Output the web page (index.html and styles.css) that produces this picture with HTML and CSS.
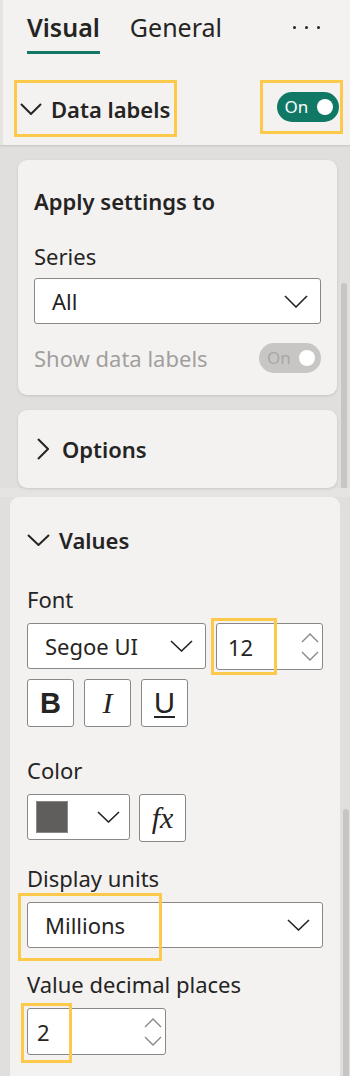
FILE: index.html
```html
<!DOCTYPE html>
<html lang="en">
<head>
    <meta charset="UTF-8">
    <meta name="viewport" content="width=device-width, initial-scale=1.0">
    <title>Format pane</title>
    <link rel="stylesheet" href="styles.css">
</head>
<body>
    <div class="top">
        <div class="tabs">
            <div class="tab active">Visual</div>
            <div class="tab">General</div>
            <div class="more"><span></span><span></span><span></span></div>
        </div>
        <div class="section-head">
            <div class="head-title">
                <svg class="chev" width="22" height="12" viewBox="0 0 22 12"><polyline points="1,1 11,11 21,1"/></svg>
                <span>Data labels</span>
                <div class="hl hl-title"></div>
            </div>
            <div class="toggle-wrap">
                <div class="toggle on">On<span class="knob"></span></div>
                <div class="hl hl-toggle"></div>
            </div>
        </div>
    </div>

    <div class="scroll">
        <div class="cards">
            <div class="card apply">
                <div class="card-title">Apply settings to</div>
                <div class="label">Series</div>
                <div class="dropdown wide">
                    <span>All</span>
                    <svg class="chev thin" width="24" height="13" viewBox="0 0 24 13"><polyline points="1,1 12,12 23,1"/></svg>
                </div>
                <div class="row">
                    <span class="disabled-text">Show data labels</span>
                    <div class="toggle off">On<span class="knob"></span></div>
                </div>
            </div>
            <div class="card options">
                <svg class="chev-right" width="12" height="22" viewBox="0 0 12 22"><polyline points="1,1 11,11 1,21"/></svg>
                <span>Options</span>
            </div>
        </div>
        <div class="scrollbar scrollbar-top"></div>
    </div>

    <div class="lower">
        <div class="values">
            <div class="values-head">
                <svg class="chev" width="23" height="12" viewBox="0 0 23 12"><polyline points="1,1 11.5,11 22,1"/></svg>
                <span>Values</span>
            </div>

            <div class="label first">Font</div>
            <div class="font-row">
                <div class="dropdown font-family">
                    <span>Segoe UI</span>
                    <svg class="chev thin" width="23" height="12" viewBox="0 0 23 12"><polyline points="1,1 11.5,11 22,1"/></svg>
                </div>
                <div class="spin size">
                    <span>12</span>
                    <div class="arrows">
                        <svg width="18" height="10" viewBox="0 0 18 10"><polyline points="1,9 9,1 17,9"/></svg>
                        <svg width="18" height="10" viewBox="0 0 18 10"><polyline points="1,1 9,9 17,1"/></svg>
                    </div>
                    <div class="hl hl-size"></div>
                </div>
            </div>
            <div class="style-row">
                <div class="sq-btn bold">B</div>
                <div class="sq-btn italic">I</div>
                <div class="sq-btn under">U</div>
            </div>

            <div class="label">Color</div>
            <div class="color-row">
                <div class="dropdown color-pick">
                    <span class="swatch"></span>
                    <svg class="chev thin" width="23" height="12" viewBox="0 0 23 12"><polyline points="1,1 11.5,11 22,1"/></svg>
                </div>
                <div class="sq-btn fx">fx</div>
            </div>

            <div class="label tight">Display units</div>
            <div class="dropdown units">
                <span>Millions</span>
                <svg class="chev thin" width="23" height="12" viewBox="0 0 23 12"><polyline points="1,1 11.5,11 22,1"/></svg>
                <div class="hl hl-units"></div>
            </div>

            <div class="label tight">Value decimal places</div>
            <div class="spin decimals">
                <span>2</span>
                <div class="arrows">
                    <svg width="18" height="10" viewBox="0 0 18 10"><polyline points="1,9 9,1 17,9"/></svg>
                    <svg width="18" height="10" viewBox="0 0 18 10"><polyline points="1,1 9,9 17,1"/></svg>
                </div>
                <div class="hl hl-dec"></div>
            </div>
        </div>
        <div class="side">
            <div class="scrollbar scrollbar-bottom"></div>
        </div>
    </div>
</body>
</html>
```

FILE: styles.css
```css
body {
    margin: 0;
    width: 350px;
    height: 1076px;
    overflow: hidden;
    background: #e1dfdd;
    font-family: "Noto Sans", "Open Sans", sans-serif;
    color: #252423;
}
svg polyline {
    fill: none;
    stroke: #252423;
    stroke-width: 2;
}
svg.thin polyline {
    stroke-width: 1.6;
}

/* header area */
.top {
    position: relative;
    z-index: 1;
    height: 145px;
    background: #f3f2f1;
    border-left: 3px solid #e6e4e2;
    box-shadow: 0 1px 2px rgba(0, 0, 0, 0.12);
}
.tabs {
    display: flex;
    align-items: flex-start;
    height: 70px;
    padding-left: 24px;
}
.tab {
    font-size: 25px;
    line-height: 32px;
    margin-top: 11px;
    margin-right: 30px;
    padding-bottom: 8px;
}
.tab.active {
    font-weight: 600;
    border-bottom: 3px solid #117865;
}
.more {
    display: flex;
    gap: 9px;
    margin-left: auto;
    margin-right: 30px;
    margin-top: 26px;
}
.more span {
    width: 3px;
    height: 3px;
    border-radius: 50%;
    background: #252423;
}
.section-head {
    display: flex;
    justify-content: space-between;
    padding: 10px 7px 0 11px;
}
.head-title {
    position: relative;
    display: flex;
    align-items: center;
    gap: 9px;
    height: 57px;
    width: 163px;
    padding-left: 6px;
    box-sizing: border-box;
    font-size: 22px;
    font-weight: 600;
}
.toggle-wrap {
    position: relative;
    display: flex;
    align-items: center;
    justify-content: center;
    width: 83px;
    height: 54px;
}
.hl {
    position: absolute;
    border: 3px solid #fdc94a;
    box-sizing: border-box;
    pointer-events: none;
}
.hl-title, .hl-toggle {
    inset: 0;
}

.toggle {
    position: relative;
    box-sizing: border-box;
    border-radius: 16px;
    font-size: 17px;
    line-height: 30px;
}
.toggle.on {
    width: 62px;
    height: 30px;
    padding-left: 8px;
    margin-left: 12px;
    background: #117865;
    color: #fff;
}
.toggle.off {
    width: 62px;
    height: 30px;
    padding-left: 8px;
    background: #c8c6c4;
    color: #a9a7a5;
}
.knob {
    position: absolute;
    right: 6px;
    top: 7px;
    width: 16px;
    height: 16px;
    border-radius: 50%;
    background: #fff;
}

/* middle scroll area */
.scroll {
    position: relative;
    height: 343px;
    padding: 15px 0 0 18px;
    box-sizing: border-box;
}
.cards {
    width: 319px;
    display: flex;
    flex-direction: column;
    gap: 15px;
}
.card {
    background: #f3f2f1;
    border-radius: 9px;
    box-shadow: 0 1px 3px rgba(0, 0, 0, 0.12);
}
.apply {
    height: 235px;
    padding: 0 16px;
    box-sizing: border-box;
}
.card-title {
    font-size: 22px;
    font-weight: 600;
    line-height: 28px;
    padding-top: 27px;
}
.label {
    font-size: 22px;
    line-height: 28px;
    margin-top: 27px;
    margin-bottom: 9px;
}
.apply .label {
    margin-top: 27px;
    margin-bottom: 8px;
}
.dropdown {
    position: relative;
    display: flex;
    align-items: center;
    justify-content: space-between;
    box-sizing: border-box;
    height: 46px;
    background: #fff;
    border: 1px solid #8a8886;
    border-radius: 3px;
    font-size: 22px;
    padding: 0 12px 0 17px;
}
.row {
    display: flex;
    justify-content: space-between;
    align-items: center;
    margin-top: 19px;
}
.disabled-text {
    font-size: 22px;
    color: #a19f9d;
}
.options {
    display: flex;
    align-items: center;
    gap: 13px;
    height: 78px;
    padding-left: 19px;
    box-sizing: border-box;
    font-size: 22px;
    font-weight: 600;
}
.scrollbar {
    position: absolute;
    width: 6px;
    background: #c8c6c4;
    border-radius: 3px;
}
.scrollbar-top {
    right: 3px;
    top: 138px;
    height: 205px;
    border-radius: 3px 3px 0 0;
}

/* values panel */
.lower {
    display: flex;
    height: 588px;
    border-top: 9px solid #e6e4e2;
}
.values {
    width: 330px;
    margin-left: 10px;
    background: #f3f2f1;
    border-radius: 9px 9px 0 0;
    padding: 0 17px;
    box-sizing: border-box;
}
.side {
    position: relative;
    flex: 1;
}
.scrollbar-bottom {
    left: 3px;
    top: 312px;
    height: 300px;
}
.values-head {
    display: flex;
    align-items: center;
    gap: 9px;
    padding-top: 29px;
    font-size: 22px;
    font-weight: 600;
    line-height: 28px;
}
.values .label {
    margin-top: 29px;
    margin-bottom: 10px;
}
.values .label.first {
    margin-top: 31px;
}
.values .label.tight {
    margin-top: 22px;
}
.font-row {
    display: flex;
    gap: 10px;
}
.font-family {
    width: 179px;
}
.spin {
    position: relative;
    display: flex;
    align-items: center;
    justify-content: space-between;
    box-sizing: border-box;
    height: 47px;
    background: #fff;
    border: 1px solid #8a8886;
    border-radius: 3px;
    font-size: 22px;
    padding: 0 3px 0 11px;
}
.size {
    width: 107px;
}
.arrows {
    display: flex;
    flex-direction: column;
    gap: 8px;
}
.arrows svg {
    display: block;
}
.arrows polyline {
    stroke: #8a8886;
    stroke-width: 1.4;
}
.hl-size {
    left: -6px;
    top: -6px;
    width: 66px;
    height: 57px;
}
.style-row {
    display: flex;
    gap: 10px;
    margin-top: 9px;
}
.sq-btn {
    width: 47px;
    height: 48px;
    box-sizing: border-box;
    background: #fff;
    border: 1px solid #8a8886;
    border-radius: 3px;
    display: flex;
    align-items: center;
    justify-content: center;
    font-size: 29px;
}
.bold {
    font-family: "Liberation Sans", sans-serif;
    font-weight: 700;
}
.italic {
    font-family: "Liberation Serif", serif;
    font-style: italic;
    font-size: 30px;
}
.under {
    font-family: "Liberation Sans", sans-serif;
    text-decoration: underline;
    text-underline-offset: 3px;
    text-decoration-thickness: 2px;
}
.color-row {
    display: flex;
    gap: 9px;
}
.color-pick {
    width: 103px;
    padding: 0 9px 0 8px;
}
.swatch {
    width: 32px;
    height: 32px;
    box-sizing: border-box;
    background: #605e5c;
    border: 1px solid #8a8886;
}
.fx {
    font-family: "Liberation Serif", serif;
    font-style: italic;
    font-size: 30px;
}
.units {
    width: 296px;
}
.hl-units {
    left: -10px;
    top: -10px;
    width: 144px;
    height: 68px;
}
.decimals {
    width: 139px;
    padding-left: 9px;
}
.hl-dec {
    left: -7px;
    top: -6px;
    width: 51px;
    height: 60px;
}
```
